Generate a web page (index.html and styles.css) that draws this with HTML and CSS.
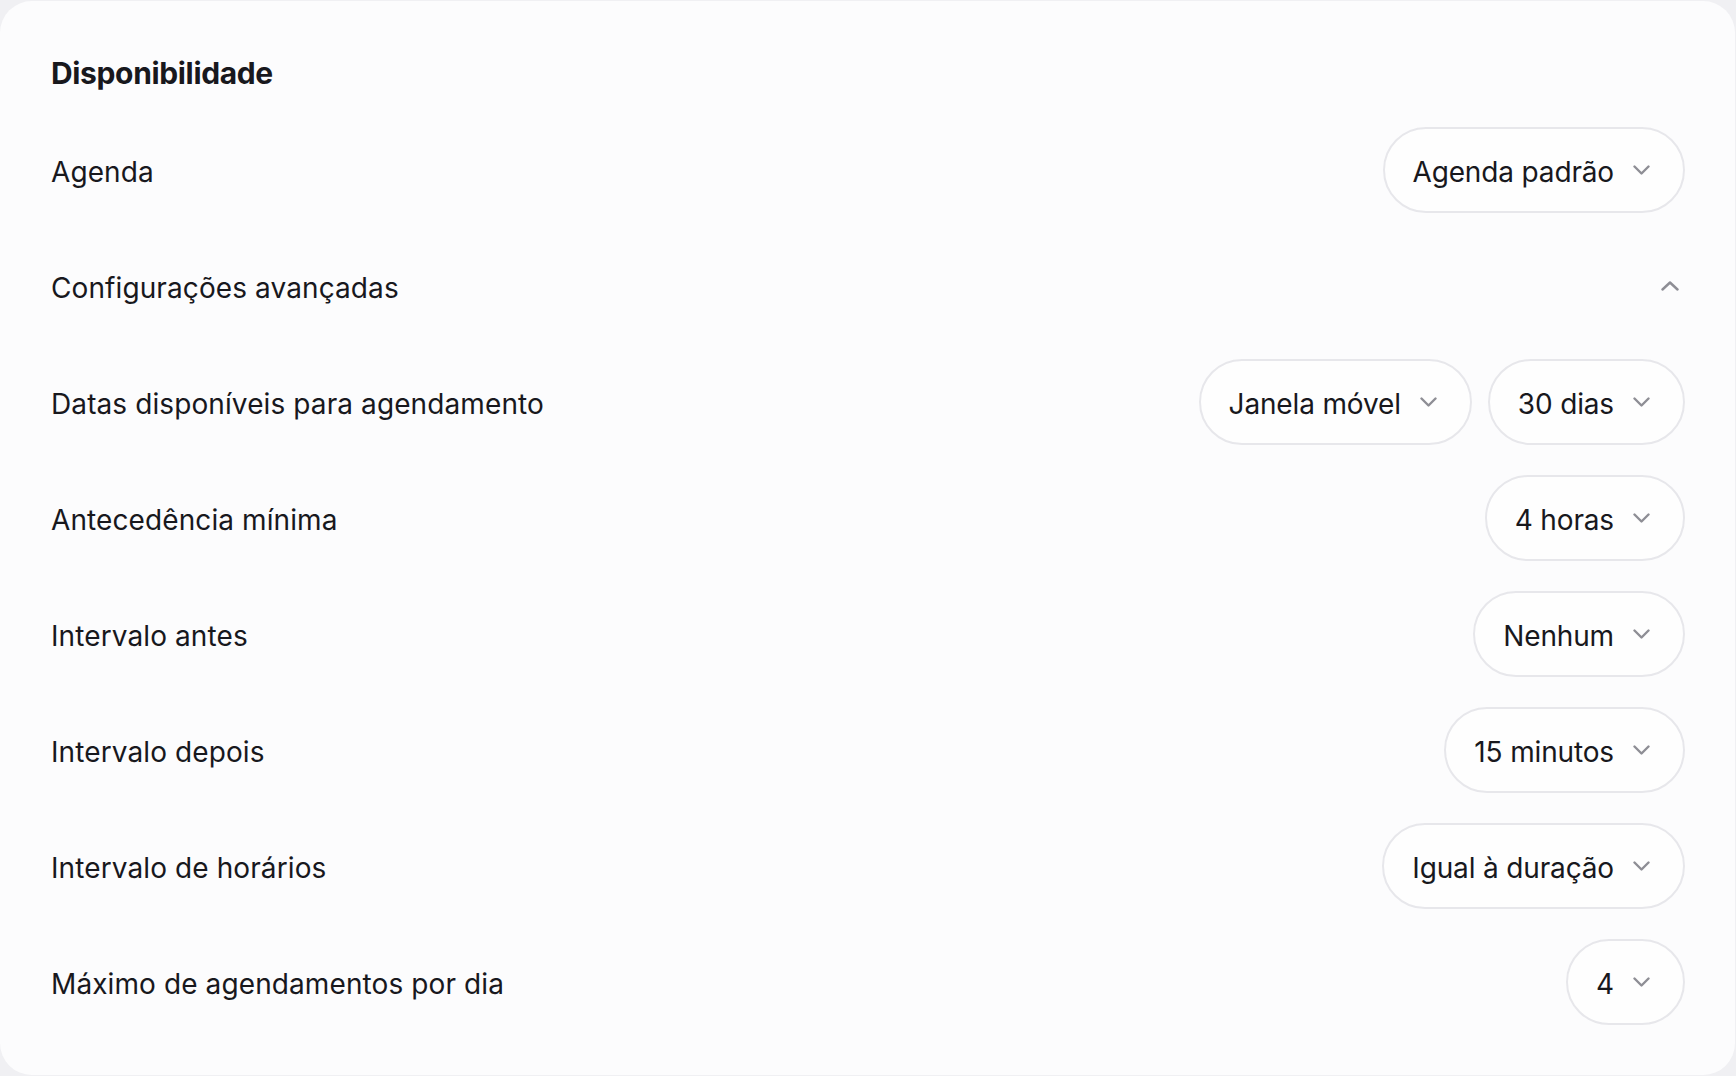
FILE: index.html
```html
<!DOCTYPE html>
<html lang="pt-BR">
<head>
<meta charset="utf-8">
<title>Disponibilidade</title>
<link rel="stylesheet" href="styles.css">
</head>
<body>
<section class="card">
  <h2 class="title">Disponibilidade</h2>
  <div class="rows">
    <div class="row">
      <span class="label">Agenda</span>
      <div class="controls">
        <button class="pill"><span class="pill-text">Agenda padrão</span><svg class="chev" viewBox="0 0 17 10"><path d="M1.5 1.5 L8.5 8.5 L15.5 1.5"/></svg></button>
      </div>
    </div>
    <div class="row">
      <span class="label">Configurações avançadas</span>
      <div class="controls">
        <svg class="chev-up" viewBox="0 0 18 10"><path d="M1.5 8.5 L9 1.5 L16.5 8.5"/></svg>
      </div>
    </div>
    <div class="row">
      <span class="label">Datas disponíveis para agendamento</span>
      <div class="controls">
        <button class="pill"><span class="pill-text">Janela móvel</span><svg class="chev" viewBox="0 0 17 10"><path d="M1.5 1.5 L8.5 8.5 L15.5 1.5"/></svg></button>
        <button class="pill"><span class="pill-text">30 dias</span><svg class="chev" viewBox="0 0 17 10"><path d="M1.5 1.5 L8.5 8.5 L15.5 1.5"/></svg></button>
      </div>
    </div>
    <div class="row">
      <span class="label">Antecedência mínima</span>
      <div class="controls">
        <button class="pill"><span class="pill-text">4 horas</span><svg class="chev" viewBox="0 0 17 10"><path d="M1.5 1.5 L8.5 8.5 L15.5 1.5"/></svg></button>
      </div>
    </div>
    <div class="row">
      <span class="label">Intervalo antes</span>
      <div class="controls">
        <button class="pill"><span class="pill-text">Nenhum</span><svg class="chev" viewBox="0 0 17 10"><path d="M1.5 1.5 L8.5 8.5 L15.5 1.5"/></svg></button>
      </div>
    </div>
    <div class="row">
      <span class="label">Intervalo depois</span>
      <div class="controls">
        <button class="pill"><span class="pill-text">15 minutos</span><svg class="chev" viewBox="0 0 17 10"><path d="M1.5 1.5 L8.5 8.5 L15.5 1.5"/></svg></button>
      </div>
    </div>
    <div class="row">
      <span class="label">Intervalo de horários</span>
      <div class="controls">
        <button class="pill"><span class="pill-text">Igual à duração</span><svg class="chev" viewBox="0 0 17 10"><path d="M1.5 1.5 L8.5 8.5 L15.5 1.5"/></svg></button>
      </div>
    </div>
    <div class="row">
      <span class="label">Máximo de agendamentos por dia</span>
      <div class="controls">
        <button class="pill"><span class="pill-text">4</span><svg class="chev" viewBox="0 0 17 10"><path d="M1.5 1.5 L8.5 8.5 L15.5 1.5"/></svg></button>
      </div>
    </div>
  </div>
</section>
</body>
</html>
```

FILE: styles.css
```css
html, body {
  margin: 0;
  padding: 0;
}
body {
  background: #f0f0f3;
  font-family: Inter, "Noto Sans", "Liberation Sans", sans-serif;
  color: #18181d;
  width: 1736px;
  height: 1076px;
  overflow: hidden;
}
.card {
  margin: 1px 1px 0 0;
  background: #fcfcfd;
  border-radius: 32px;
  padding: 52px 50px 49px 51px;
  box-sizing: border-box;
  height: 1074px;
}
.title {
  margin: 0;
  font-size: 30px;
  line-height: 40px;
  font-weight: 700;
  letter-spacing: -0.35px;
}
.rows {
  margin-top: 34px;
  display: flex;
  flex-direction: column;
  gap: 30px;
}
.row {
  height: 86px;
  display: flex;
  align-items: center;
  justify-content: space-between;
}
.label {
  font-size: 28px;
  letter-spacing: 0.1px;
  padding-top: 4px;
}
.controls {
  display: flex;
  align-items: center;
  gap: 16px;
}
.pill {
  height: 86px;
  box-sizing: border-box;
  display: inline-flex;
  align-items: center;
  gap: 19px;
  padding: 0 33px 0 28px;
  border: 2px solid #e7e7eb;
  border-radius: 43px;
  background: #fefefe;
  font-family: inherit;
  font-size: 28px;
  letter-spacing: -0.15px;
  color: #18181d;
}
.pill-text {
  padding-top: 4px;
}
.chev {
  width: 17px;
  height: 10px;
  fill: none;
  stroke: #8e8e95;
  stroke-width: 2.4;
  stroke-linecap: round;
  stroke-linejoin: round;
}
.chev-up {
  width: 18px;
  height: 10px;
  margin-right: 6px;
  fill: none;
  stroke: #8e8e95;
  stroke-width: 2.4;
  stroke-linecap: round;
  stroke-linejoin: round;
}
```
